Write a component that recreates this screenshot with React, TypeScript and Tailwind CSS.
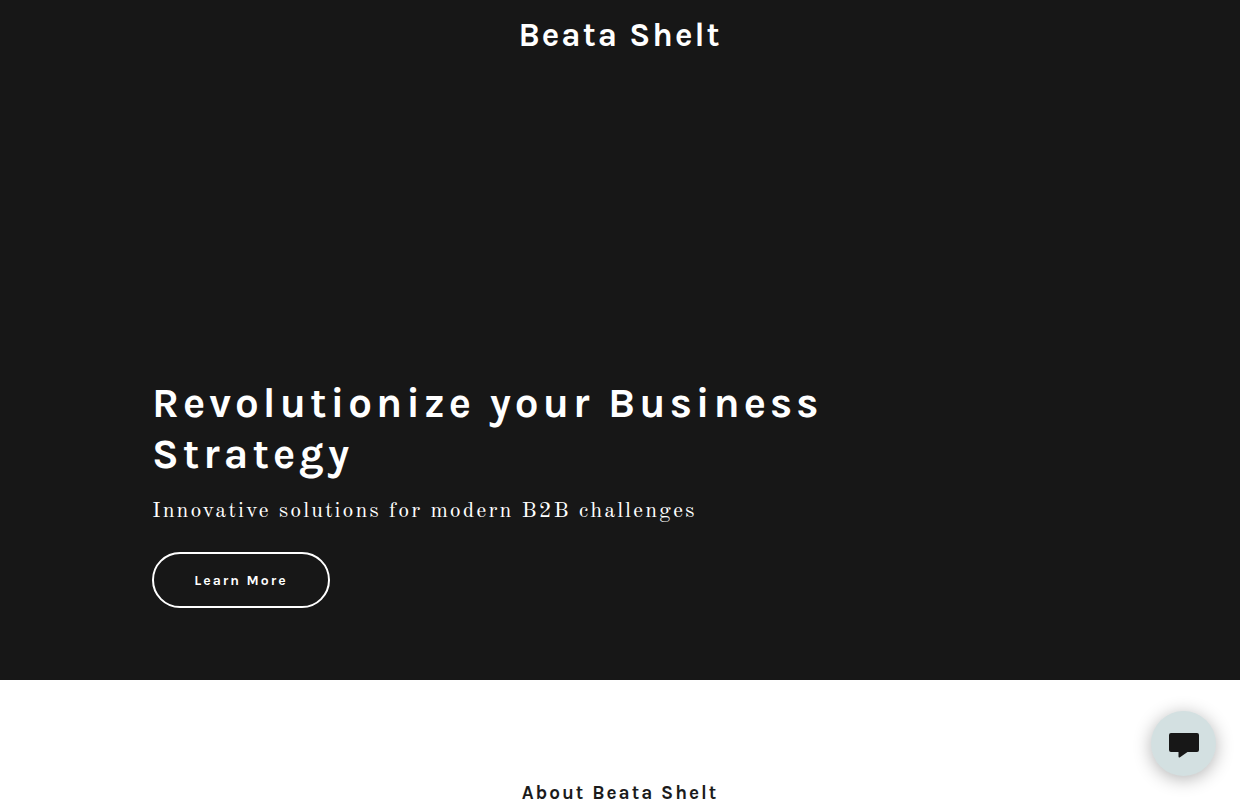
export default function App() {
  return (
    <div className="min-h-screen bg-white font-['Karla','Inter','Liberation_Sans',sans-serif]">
      <section className="flex min-h-[680px] flex-col justify-between bg-[#171717] text-white">
        <header className="flex justify-center px-6 pt-3">
          <a href="#" className="text-[33px] leading-[46px] font-bold tracking-[2px]">Beata Shelt</a>
        </header>
        <div className="px-[152px] pb-[72px]">
          <div className="max-w-[700px]">
            <h1 className="text-[42px] leading-[51px] font-bold tracking-[4px]">Revolutionize your Business Strategy</h1>
            <p className="mt-3 font-['Old_Standard_TT','Liberation_Serif',serif] text-[22px] leading-[38px] tracking-[2px]">Innovative solutions for modern B2B challenges</p>
            <button type="button" className="mt-[22px] h-14 min-w-[178px] rounded-full border-2 border-white px-10 text-[14px] font-bold tracking-[2px]">Learn More</button>
          </div>
        </div>
      </section>
      <section className="px-6 pt-[100px] text-center text-[#1b1b1b]">
        <h2 className="text-[19px] leading-[26px] font-bold tracking-[2px]">About Beata Shelt</h2>
      </section>
      <button type="button" aria-label="Open chat" className="fixed right-6 bottom-6 flex size-[65px] items-center justify-center rounded-full bg-[#d3e0e1] pt-1 shadow-[0_3px_18px_rgba(0,0,0,0.3)]">
        <svg width="30" height="25" viewBox="0 0 30 25" fill="#171717" aria-hidden="true">
          <path d="M2 0H28Q30 0 30 2V17Q30 19 28 19H18.5L11 24.3Q9.5 25 9.5 23.5V19H2Q0 19 0 17V2Q0 0 2 0Z" />
        </svg>
      </button>
    </div>
  );
}
